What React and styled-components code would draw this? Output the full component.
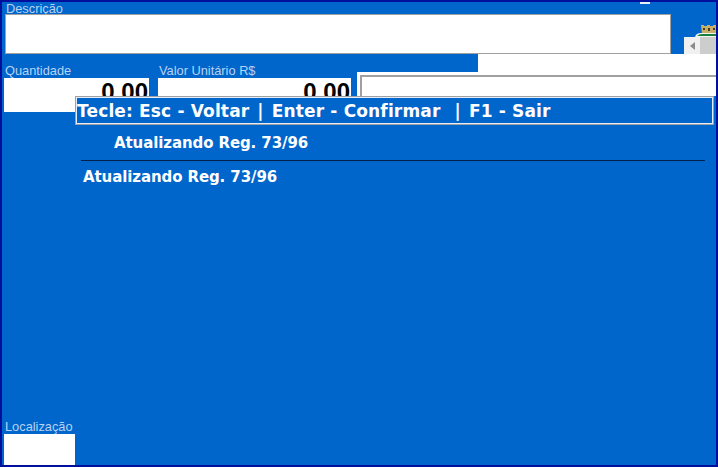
import React from "react";
import styled, { createGlobalStyle } from "styled-components";

const GlobalStyle = createGlobalStyle`
  html, body { margin: 0; padding: 0; background: #0066cc; }
`;

function Logo() {
  return (
    <LogoBox>
      <svg width="32" height="29" viewBox="0 0 32 29">
        <path d="M17 0h3v1h3V0h3v1h3V0h3v9H18z" fill="#c9ae6a" />
        <path d="M19 3h2v2h-2zM24 3h2v3h-2zM29 3h2v2h-2z" fill="#4a3c20" />
        <path d="M11 12q1-4 6-4h15v4z" fill="#f4f4ee" />
        <path d="M13 11q2-2 5-2h14v2z" fill="#17803a" />
        <rect x="0" y="12" width="16" height="17" fill="#f0f0f0" />
        <rect x="16" y="12" width="16" height="17" fill="#cdcdcd" />
        <path d="M11 17v8l-5-4z" fill="#8a8a8a" />
      </svg>
    </LogoBox>
  );
}

export default function App() {
  return (
    <>
      <GlobalStyle />
      <Window>
        <TopMark />
        <TopRow>
          <DescField>
            <Label>Descrição</Label>
            <DescInput />
          </DescField>
          <Logo />
        </TopRow>
        <MiddleRow>
          <Fields>
            <Field $width={145}>
              <Label>Quantidade</Label>
              <NumberInput>0,00</NumberInput>
            </Field>
            <Field $width={193}>
              <Label>Valor Unitário R$</Label>
              <NumberInput>0,00</NumberInput>
            </Field>
          </Fields>
          <RightColumn>
            <Band />
            <Panel>
              <PanelInner />
            </Panel>
          </RightColumn>
        </MiddleRow>
        <BottomRow>
          <Field $width={71}>
            <Label>Localização</Label>
            <LocationInput />
          </Field>
        </BottomRow>
        <Dialog>
          <KeyBar>
            Tecle: Esc - Voltar <Sep>|</Sep> Enter - Confirmar &nbsp;<Sep>|</Sep> F1 - Sair
          </KeyBar>
          <StatusTop>Atualizando Reg. 73/96</StatusTop>
          <Divider />
          <StatusBottom>Atualizando Reg. 73/96</StatusBottom>
        </Dialog>
      </Window>
    </>
  );
}

const Window = styled.div`
  position: relative;
  box-sizing: border-box;
  width: 718px;
  height: 467px;
  display: flex;
  flex-direction: column;
  border: 2px solid #000f9c;
  background: #0066cc;
  overflow: hidden;
  font-family: "Liberation Sans", Arial, sans-serif;
`;
const TopMark = styled.span`
  position: absolute;
  left: 638px;
  top: 0;
  width: 10px;
  height: 2px;
  background: #e6effa;
`;
const TopRow = styled.div`
  display: flex;
  align-items: flex-end;
  height: 52px;
  padding-left: 3px;
`;
const DescField = styled.div`
  display: flex;
  flex-direction: column;
  width: 666px;
`;
const Label = styled.label`
  display: block;
  height: 12px;
  margin-left: 1px;
  font-size: 12.8px;
  line-height: 14px;
  color: #b9d2f2;
  white-space: nowrap;
`;
const DescInput = styled.div`
  box-sizing: border-box;
  height: 40px;
  background: #fff;
  border: 1px solid #a0a0a0;
`;
const LogoBox = styled.div`
  display: flex;
  margin-left: 13px;
  height: 29px;
`;
const MiddleRow = styled.div`
  display: flex;
  padding-left: 2px;
`;
const Fields = styled.div`
  display: flex;
  gap: 9px;
  padding-top: 10px;
`;
const Field = styled.div`
  width: ${(p) => p.$width}px;
`;
const NumberInput = styled.div`
  box-sizing: border-box;
  height: 34px;
  margin-top: 2px;
  padding-right: 1px;
  background: #fff;
  text-align: right;
  font-size: 24px;
  font-weight: 700;
  line-height: 28px;
  color: #000;
  overflow: hidden;
`;
const RightColumn = styled.div`
  display: flex;
  flex-direction: column;
  align-items: flex-end;
  flex: 1;
  margin-left: 6px;
`;
const Band = styled.div`
  width: 238px;
  height: 18px;
  background: #fff;
`;
const Panel = styled.div`
  box-sizing: border-box;
  width: 100%;
  height: 60px;
  padding: 3px 0 0 3px;
  background: #fff;
`;
const PanelInner = styled.div`
  height: 100%;
  border: solid #a0a0a0;
  border-width: 2px 0 0 2px;
`;
const BottomRow = styled.div`
  margin-top: auto;
  padding-left: 2px;
`;
const LocationInput = styled.div`
  height: 31px;
  margin-top: 2px;
  background: #fff;
`;
const Dialog = styled.div`
  position: absolute;
  left: 73px;
  top: 94px;
  right: 0;
  bottom: 0;
  background: #0066cc;
  font-family: "DejaVu Sans", Verdana, sans-serif;
  font-weight: 700;
  color: #fff;
`;
const KeyBar = styled.div`
  box-sizing: border-box;
  width: 639px;
  height: 29px;
  padding-left: 1px;
  border: 1px solid #a0a0a0;
  outline: 1px solid #e4eefa;
  outline-offset: -2px;
  font-size: 17px;
  letter-spacing: 0.15px;
  line-height: 29px;
  white-space: nowrap;
`;
const Sep = styled.span`
  margin: 0 2px;
`;
const StatusTop = styled.div`
  margin: 9px 0 0 39px;
  font-size: 15px;
  letter-spacing: -0.1px;
  line-height: 18px;
`;
const Divider = styled.hr`
  height: 1px;
  margin: 8px 11px 0 6px;
  border: 0;
  background: #04204a;
`;
const StatusBottom = styled.div`
  margin: 7px 0 0 8px;
  font-size: 15px;
  letter-spacing: -0.1px;
  line-height: 18px;
`;
